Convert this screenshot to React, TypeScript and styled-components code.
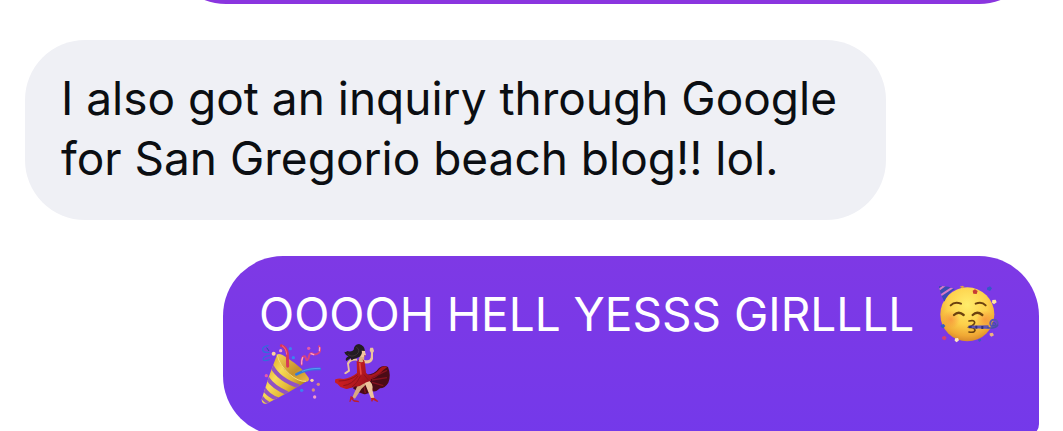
import React from "react";
import styled, { createGlobalStyle } from "styled-components";

const GlobalStyle = createGlobalStyle`
  *, *::before, *::after { box-sizing: border-box; }
  body { margin: 0; background: #fff; }
`;

const Conversation = styled.main`
  display: flex;
  flex-direction: column;
  gap: 36px;
  height: 100vh;
  padding: 0 24px 0 25px;
  overflow: hidden;
  font-family: Inter, "Liberation Sans", sans-serif;
  font-size: 46px;
  line-height: 60px;
`;

const Bubble = styled.p<{ $inset: number }>`
  flex: none;
  width: calc(100% - ${({ $inset }) => $inset}px);
  min-height: 180px;
  margin: 0;
  padding: 28px 36px 32px;
  border-radius: 60px;
`;

const Received = styled(Bubble)`
  align-self: flex-start;
  background: #eff0f5;
  color: #0b0e12;
`;

const Sent = styled(Bubble)`
  align-self: flex-end;
  border-bottom-right-radius: 12px;
  background: linear-gradient(#7e39e5, #7439ea);
  color: #fff;
`;

const Previous = styled(Bubble)`
  align-self: flex-end;
  margin-top: -176px;
  background: #8a35df;
`;

const Emoji = styled.svg`
  width: 60px;
  height: 60px;
  margin: -4px -2px -4px 2px;
  vertical-align: -9px;
`;

function PartyFace() {
  return (
    <Emoji viewBox="36 27 180 180" role="img" aria-label="Partying face">
      <defs>
        <radialGradient id="face" cx="50%" cy="32%" r="68%">
          <stop offset="0" stopColor="#ffed6c" />
          <stop offset="0.55" stopColor="#fdd04b" />
          <stop offset="0.85" stopColor="#f0a834" />
          <stop offset="1" stopColor="#d98a2c" />
        </radialGradient>
        <radialGradient id="blush">
          <stop offset="0" stopColor="#f5803a" stopOpacity="0.6" />
          <stop offset="1" stopColor="#f5803a" stopOpacity="0" />
        </radialGradient>
        <clipPath id="hat"><path d="M35 34 Q56 30 84 42 Q64 54 52 80 Q40 58 35 34Z" /></clipPath>
      </defs>
      <circle cx="121" cy="118" r="81" fill="url(#face)" />
      <circle cx="72" cy="133" r="27" fill="url(#blush)" />
      <circle cx="174" cy="133" r="27" fill="url(#blush)" />
      <g clipPath="url(#hat)">
        <rect x="32" y="28" width="60" height="56" fill="#3b4bb4" />
        <g stroke="#d77ac5" strokeWidth="6">
          <path d="M34 46 L58 28M40 62 L82 34" />
        </g>
      </g>
      <g fill="none" stroke="#6c420f" strokeWidth="6" strokeLinecap="round">
        <path d="M71 91 Q83 78 102 86M146 86 Q164 78 176 91" />
        <path d="M81 120 Q95 107 110 120M137 120 Q150 107 166 120" strokeWidth="7" />
        <path d="M126 138 Q143 134 143 143 Q142 150 128 156 Q144 159 144 166 Q142 174 126 171" strokeWidth="5" />
      </g>
      <path d="M125 152 L184 151 L188 162 L125 159Z" fill="#5f55b5" />
      <path d="M125 152h9v8h-9zM145 152h6v9h-6zM163 153h6v9h-6z" fill="#342f78" />
      <circle cx="201" cy="145" r="11" fill="none" stroke="#5953b5" strokeWidth="6" />
      <path d="M180 157 Q205 164 213 149 M196 146 q5-7 9 0 t-10 4" fill="none" stroke="#4750a5" strokeWidth="4" />
      <path d="M137 47 l7-4 8 5-3 9-10-1z" fill="#c83b35" />
      <path d="M180 38 l9-4 6 6-6 8-9-4z" fill="#3658c8" />
      <path d="M196 75l10-1 3 8-8 6-6-5z" fill="#ffe49b" />
      <path d="M98 35l8-3 7 4-6 4z" fill="#e2a244" />
      <path d="M188 175l9-2 4 8-8 4-5-4z" fill="#efb37f" />
      <path d="M41 150l9-3 5 6-6 7-8-4z" fill="#355cc4" />
      <path d="M45 186l8-4 6 6-5 8-8-3z" fill="#d64071" />
      <path d="M84 190l9-1 3 7-7 6-6-5z" fill="#ffe7bd" />
      <path d="M152 194l8-2 3 4-6 5z" fill="#395fbf" />
    </Emoji>
  );
}

function PartyPopper() {
  return (
    <Emoji viewBox="36 18 180 180" role="img" aria-label="Party popper">
      <defs>
        <linearGradient id="cone" x1="0" y1="0.2" x2="0.8" y2="0.8">
          <stop offset="0" stopColor="#d99a22" />
          <stop offset="0.4" stopColor="#f7dc57" />
          <stop offset="0.7" stopColor="#e4b936" />
          <stop offset="1" stopColor="#a97a1e" />
        </linearGradient>
        <linearGradient id="mouth" x1="0" y1="0" x2="1" y2="1">
          <stop offset="0" stopColor="#f4ce56" />
          <stop offset="0.6" stopColor="#c6902b" />
          <stop offset="1" stopColor="#ebbc48" />
        </linearGradient>
        <clipPath id="coneClip">
          <path d="M84 50 Q92 84 121 109 Q149 132 178 127 Q120 165 52 197 Q38 199 38 184 Q57 118 84 50Z" />
        </clipPath>
      </defs>
      <path d="M84 50 Q92 84 121 109 Q149 132 178 127 Q120 165 52 197 Q38 199 38 184 Q57 118 84 50Z" fill="url(#cone)" />
      <g clipPath="url(#coneClip)" fill="none" stroke="#9153c3" strokeWidth="12">
        <path d="M68 84 Q90 126 150 145" />
        <path d="M54 119 Q72 148 116 166" />
        <path d="M43 149 Q56 174 88 184" />
        <path d="M36 174 Q43 186 60 196" strokeWidth="9" />
      </g>
      <path d="M84 50 Q92 43 116 61 Q159 88 179 119 Q183 130 170 131 Q145 131 120 108 Q91 83 84 50Z" fill="url(#mouth)" />
      <path d="M84 50 Q92 83 121 108 Q149 132 171 130" fill="none" stroke="#f8df75" strokeWidth="3" />
      <path d="M97 23 Q111 27 115 46 L116 85" fill="none" stroke="#d83759" strokeWidth="9" strokeLinecap="round" />
      <path d="M99 23 Q112 31 113 50" fill="none" stroke="#f4688c" strokeWidth="3" />
      <path d="M142 109 Q174 91 214 93" fill="none" stroke="#3279dc" strokeWidth="8" strokeLinecap="round" />
      <path d="M159 100 Q180 91 214 91" fill="none" stroke="#70a8ff" strokeWidth="2" />
      <path d="M57 23 Q39 26 41 37 Q45 45 60 43 M61 53 Q39 56 43 66 Q47 70 61 65" fill="none" stroke="#316edb" strokeWidth="4" strokeLinecap="round" />
      <path d="M53 29l7 10" stroke="#234dac" strokeWidth="3" />
      <path d="M158 80 Q156 64 161 57 Q168 50 171 62 Q173 72 179 60 Q181 44 189 46 Q200 54 211 43 Q216 35 210 25" fill="none" stroke="#d84283" strokeWidth="6" strokeLinecap="round" />
      <path d="M158 78 Q157 67 161 59M186 47l8 3M211 38l1-9" fill="none" stroke="#ffa1c6" strokeWidth="4" strokeLinecap="round" />
      <g fill="#3c83ef"><circle cx="124" cy="32" r="5" /><circle cx="133" cy="59" r="5" /><circle cx="158" cy="157" r="5" /></g>
      <g fill="#e65aa9"><circle cx="179" cy="31" r="5" /><circle cx="52" cy="113" r="5" /></g>
      <g fill="#f29bcb"><circle cx="95" cy="38" r="5" /><circle cx="197" cy="177" r="5" /></g>
      <g fill="#ffd19a"><circle cx="74" cy="47" r="6" /><circle cx="189" cy="127" r="5" /></g>
      <g fill="#d88a80"><circle cx="208" cy="139" r="5" /><circle cx="193" cy="156" r="5" /></g>
    </Emoji>
  );
}

function Dancer() {
  return (
    <Emoji viewBox="34 18 180 180" role="img" aria-label="Woman dancing">
      <defs>
        <linearGradient id="dress" x1="0" y1="0" x2="1" y2="0.5">
          <stop offset="0" stopColor="#cf2028" />
          <stop offset="0.5" stopColor="#c51c22" />
          <stop offset="1" stopColor="#a0141c" />
        </linearGradient>
      </defs>
      <path d="M126 110 Q154 112 169 90 Q182 80 196 87 Q206 112 197 134 Q187 151 172 151 Q159 164 147 159 Q134 172 122 168 Q105 164 91 151 L104 126Z" fill="#4b0b16" />
      <path d="M135 112 Q160 110 171 92 Q182 80 194 87 Q180 96 170 108 Q158 122 140 124Z" fill="#a8161f" />
      <path d="M147 120l46-23M148 126l45-7M148 133l34 10M138 142l13 15M124 144l4 21M112 141l-4 16" stroke="#851320" strokeWidth="4" fill="none" />
      <path d="M114 132 Q105 140 101 151 L89 178 L97 182 L116 153 L132 137Z" fill="#d9a980" />
      <path d="M134 123 Q153 136 149 155 L156 184 L147 186 L135 157 L125 132Z" fill="#edc49c" />
      <path d="M84 174 l7 3 2 9 14 2 3 5-16-2-8-7-3 8-3-1z" fill="#bd202b" />
      <path d="M145 180 l10-1 8 7 4 4-3 2-13-7-2 6-3-1z" fill="#bd202b" />
      <path d="M102 68 Q112 76 126 67 L130 104 Q147 121 145 128 Q130 132 120 139 Q108 148 99 145 Q90 150 80 151 Q72 155 64 151 Q50 147 44 137 Q34 137 38 124 Q50 120 62 123 Q85 120 103 105Z" fill="url(#dress)" />
      <path d="M105 110Q83 129 48 129M106 114Q88 140 62 143M113 115Q104 136 88 147M124 110l13 16" stroke="#8f111a" strokeWidth="3" fill="none" />
      <path d="M111 75l4 35" stroke="#e44841" strokeWidth="5" />
      <path d="M113 50 L125 54 L124 69 Q117 76 107 70Z" fill="#dcae83" />
      <path d="M116 31 Q128 35 128 45 L130 51 L126 53 Q124 60 115 56Z" fill="#f2c69e" />
      <path d="M103 68 Q84 66 79 79 L82 100 L69 109 L64 106 L67 103 L76 97 L73 75 Q82 57 103 62Z" fill="#edc39c" />
      <path d="M124 65 Q141 70 144 59 L145 45 L141 37 L143 29 L151 29 L154 39 L151 44 L151 63 Q146 79 126 76Z" fill="#edc39c" />
      <path d="M127 39 Q126 22 109 18 Q94 20 93 35 Q88 43 73 39 Q71 43 65 41 Q68 53 78 54 Q65 61 71 69 Q79 64 84 60 Q86 71 91 64 Q101 61 111 56 Q120 47 117 38Z" fill="#231c22" />
      <path d="M101 27 Q116 39 101 50 Q87 59 76 49" stroke="#403139" strokeWidth="3" fill="none" />
      <path d="M108 65l-3 10M121 65l4 9" stroke="#b81e24" strokeWidth="3" />
      <path d="M124 54l4-1" stroke="#b6333e" strokeWidth="3" />
    </Emoji>
  );
}

export default function App() {
  return (
    <>
      <GlobalStyle />
      <Conversation>
        <Previous as="div" $inset={141} />
        <Received $inset={153}>
          I also got an inquiry through Google for San Gregorio beach blog!! lol.
        </Received>
        <Sent $inset={198}>
          OOOOH HELL YESSS GIRLLLL&ensp;<PartyFace /> <PartyPopper /> <Dancer />
        </Sent>
      </Conversation>
    </>
  );
}
